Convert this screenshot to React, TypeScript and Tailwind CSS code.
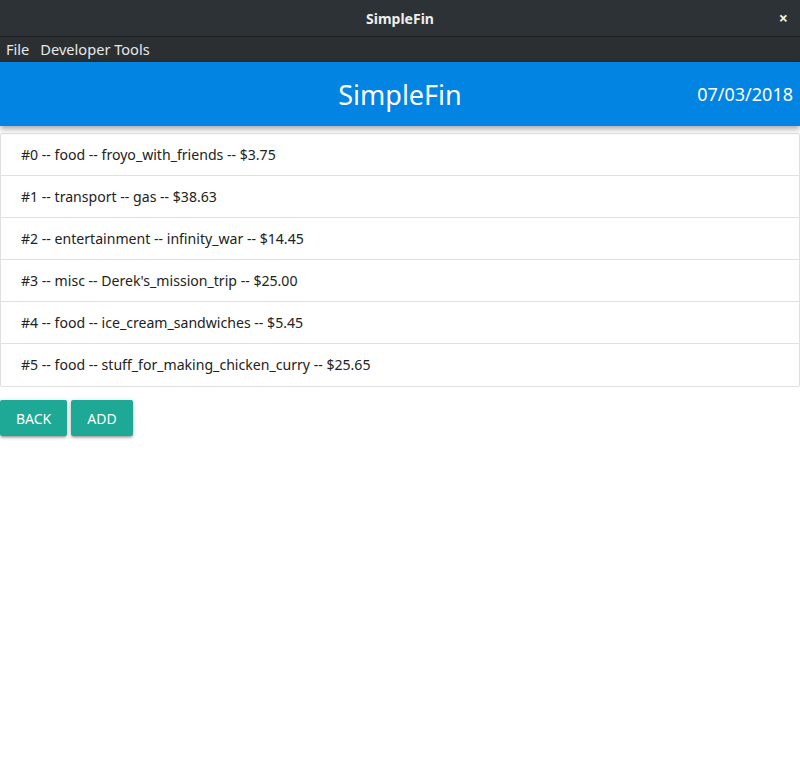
import React from "react";

const items = [
  "#0 -- food -- froyo_with_friends -- $3.75",
  "#1 -- transport -- gas -- $38.63",
  "#2 -- entertainment -- infinity_war -- $14.45",
  "#3 -- misc -- Derek's_mission_trip -- $25.00",
  "#4 -- food -- ice_cream_sandwiches -- $5.45",
  "#5 -- food -- stuff_for_making_chicken_curry -- $25.65",
];

export default function App() {
  return (
    <div
      className="w-[800px] h-[775px] bg-white overflow-hidden flex flex-col"
      style={{ fontFamily: '"Noto Sans", "Open Sans", sans-serif' }}
    >
      <div className="relative h-[37px] bg-[#2d3236] border-b border-[#1c1f21] flex items-center justify-center">
        <span className="text-[14px] font-bold text-[#eeeeec]">SimpleFin</span>
        <span className="absolute right-[12px] top-[8px] text-[#eeeeec] text-[16px] font-bold leading-[20px]">×</span>
      </div>
      <div className="h-[25px] bg-[#2b2f32] flex items-center gap-[11px] px-[6px] text-[14.6px] text-[#e8e8e8]">
        <span>File</span>
        <span>Developer Tools</span>
      </div>
      <div className="relative h-[64px] bg-[#0284e3] flex items-center justify-center shadow-[0_3px_6px_rgba(0,0,0,0.35)] z-10">
        <span className="text-[27px] text-white leading-none">SimpleFin</span>
        <span className="absolute right-[7px] top-[20px] text-[18px] text-white leading-[24px]">07/03/2018</span>
      </div>
      <div className="mt-[7px] border border-[#e0e0e0] rounded-[2px]">
        {items.map((t, i) => (
          <div
            key={i}
            className={`h-[42px] flex items-center px-[20px] text-[14.1px] text-[#222] ${i < items.length - 1 ? "border-b border-[#e0e0e0]" : ""}`}
          >
            {t}
          </div>
        ))}
      </div>
      <div className="mt-[13px] flex gap-[4px]">
        <button className="h-[36px] px-[16px] bg-[#1ea896] text-white text-[14px] rounded-[2px] uppercase shadow-[0_2px_2px_0_rgba(0,0,0,0.14),0_3px_1px_-2px_rgba(0,0,0,0.12),0_1px_5px_0_rgba(0,0,0,0.2)]">
          Back
        </button>
        <button className="h-[36px] px-[16px] bg-[#1ea896] text-white text-[14px] rounded-[2px] uppercase shadow-[0_2px_2px_0_rgba(0,0,0,0.14),0_3px_1px_-2px_rgba(0,0,0,0.12),0_1px_5px_0_rgba(0,0,0,0.2)]">
          Add
        </button>
      </div>
    </div>
  );
}
